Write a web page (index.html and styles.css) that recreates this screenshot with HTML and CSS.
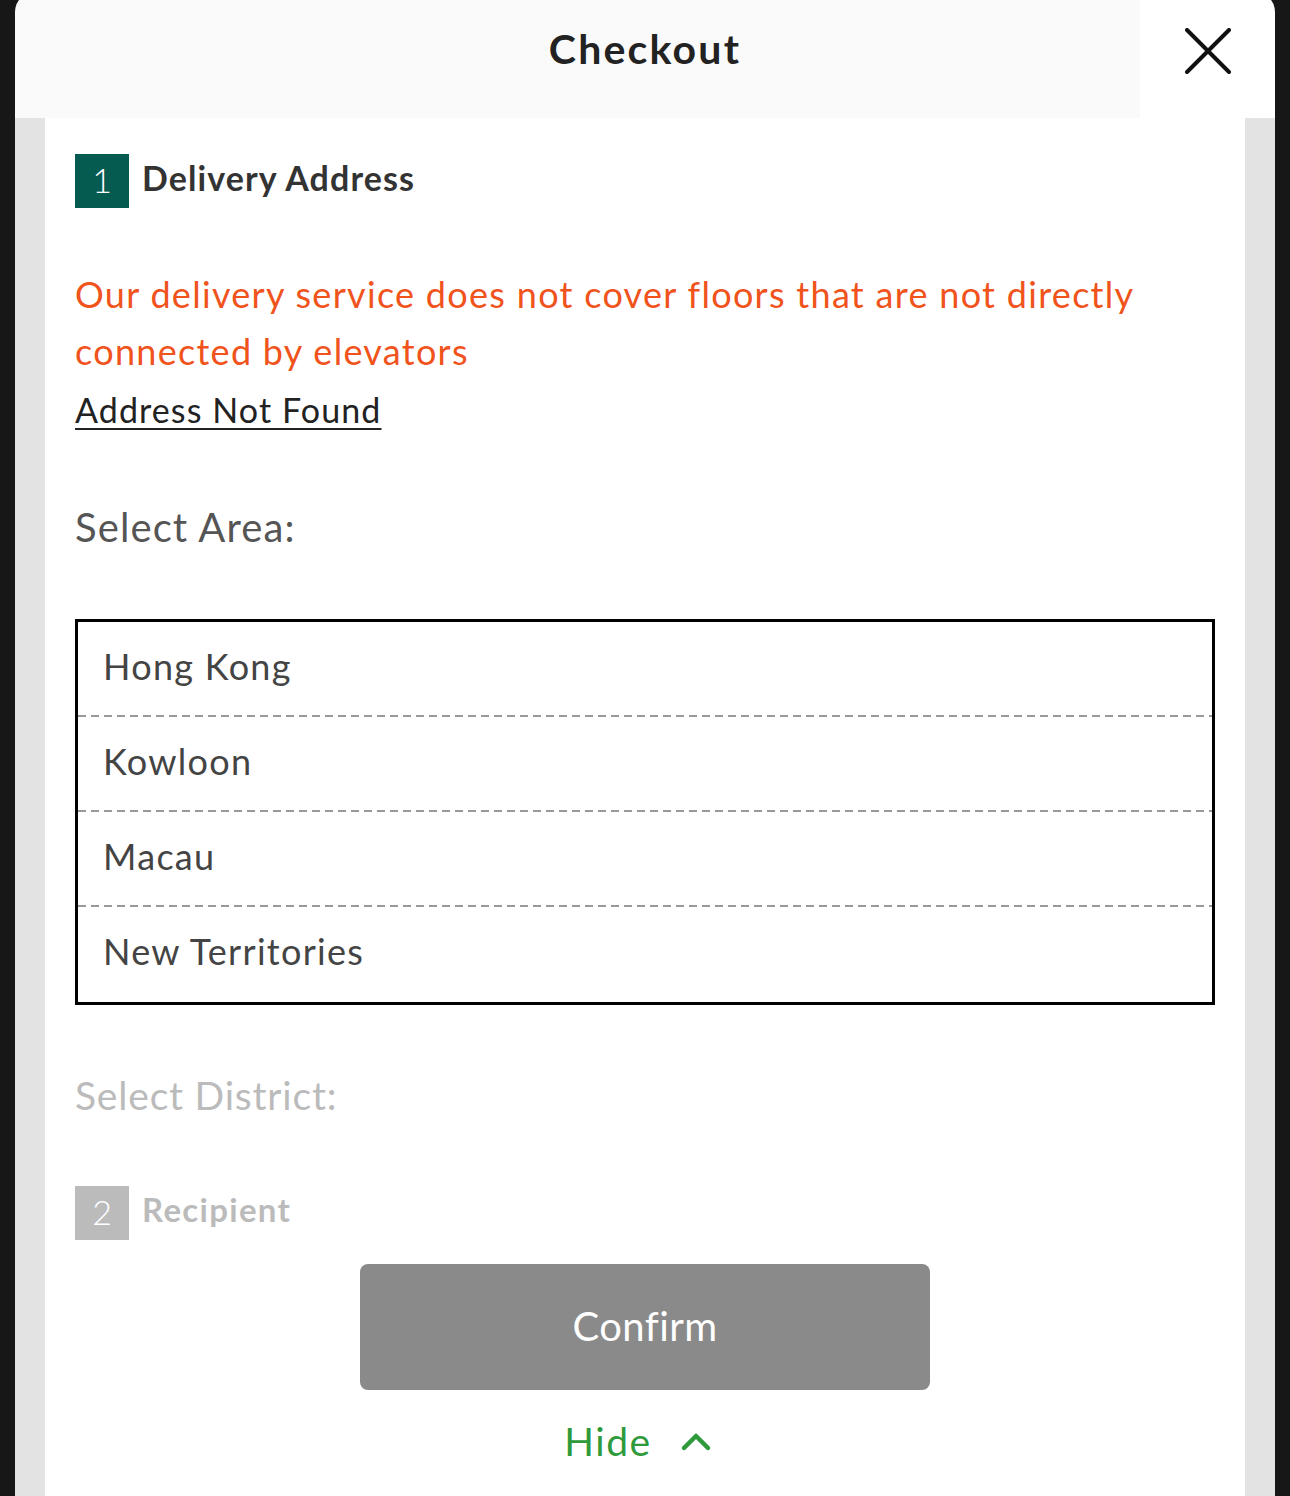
FILE: index.html
```html
<!DOCTYPE html>
<html lang="en">
<head>
  <meta charset="UTF-8" />
  <meta name="viewport" content="width=device-width, initial-scale=1.0" />
  <title>Checkout</title>
  <link rel="stylesheet" href="styles.css">
</head>
<body>
  <div class="modal">
    <div class="modal-header">
      <div class="header-side"></div>
      <h1 class="modal-title">Checkout</h1>
      <button class="close-btn" aria-label="Close">
        <svg width="46" height="46" viewBox="0 0 46 46">
          <path d="M2 2 L44 44 M44 2 L2 44" stroke="#111" stroke-width="4" stroke-linecap="round" fill="none"/>
        </svg>
      </button>
    </div>

    <div class="sheet">
      <div class="content">
        <div class="step">
          <span class="step-num">1</span>
          <span class="step-title">Delivery Address</span>
        </div>

        <p class="warning">Our delivery service does not cover floors that are not directly connected by elevators</p>
        <a class="not-found" href="#">Address Not Found</a>

        <h3 class="field-label">Select Area:</h3>
        <ul class="area-list">
          <li>Hong Kong</li>
          <li>Kowloon</li>
          <li>Macau</li>
          <li>New Territories</li>
        </ul>

        <h3 class="field-label disabled">Select District:</h3>

        <div class="step step-off">
          <span class="step-num">2</span>
          <span class="step-title">Recipient</span>
        </div>

        <button class="confirm-btn" disabled>Confirm</button>

        <div class="hide-row">
          <span>Hide</span>
          <svg width="32" height="22" viewBox="0 0 32 22">
            <path d="M4 17 L16 5 L28 17" stroke="#2f9a3b" stroke-width="4.5" stroke-linecap="round" stroke-linejoin="round" fill="none"/>
          </svg>
        </div>
      </div>
    </div>
  </div>
</body>
</html>
```

FILE: styles.css
```css
body {
  margin: 0;
  background: #161716;
  font-family: Lato, "Noto Sans", sans-serif;
  letter-spacing: 1.1px;
  height: 1496px;
  overflow: hidden;
}
.modal {
  margin: -8px 15px 0;
  border-radius: 20px 20px 0 0;
  overflow: hidden;
  height: 1504px;
  display: flex;
  flex-direction: column;
}
.modal-header {
  display: grid;
  grid-template-columns: 135px 1fr 135px;
  height: 126px;
  flex-shrink: 0;
}
.header-side, .modal-title {
  background: #fafafa;
}
.modal-title {
  margin: 0;
  padding-top: 2px;
  text-align: center;
  font-size: 41px;
  font-weight: 700;
  letter-spacing: 2.2px;
  color: #222;
  line-height: 110px;
}
.close-btn {
  background: #fff;
  border: none;
  padding: 0 0 8px 1px;
  display: flex;
  align-items: center;
  justify-content: center;
  cursor: pointer;
}
.sheet {
  flex: 1;
  background: #e3e3e3;
  padding: 0 30px;
}
.content {
  background: #fff;
  height: 100%;
  padding: 36px 30px 0;
  box-sizing: border-box;
}
.step {
  display: flex;
  align-items: center;
  height: 54px;
}
.step-num {
  width: 54px;
  height: 54px;
  padding-bottom: 3px;
  box-sizing: border-box;
  background: #065b51;
  color: #fff;
  font-size: 34px;
  font-weight: 300;
  letter-spacing: 0;
  display: flex;
  align-items: center;
  justify-content: center;
}
.step-title {
  margin-left: 13px;
  padding-bottom: 8px;
  font-size: 34px;
  font-weight: 700;
  color: #333;
}
.step-off .step-num {
  background: #bbb;
}
.step-off .step-title {
  color: #bbb;
  font-size: 33px;
  letter-spacing: 1.3px;
}
.warning {
  margin: 58px 0 0;
  font-size: 36px;
  line-height: 57px;
  letter-spacing: 1.3px;
  color: #f0531c;
}
.not-found {
  display: block;
  margin-top: 10px;
  font-size: 34px;
  line-height: 40px;
  color: #222;
  text-decoration: underline;
  text-underline-offset: 5px;
  text-decoration-thickness: 2px;
  width: max-content;
}
.field-label {
  margin: 74px 0 0;
  font-size: 40px;
  font-weight: 400;
  line-height: 46px;
  color: #555;
}
.field-label.disabled {
  margin-top: 67px;
  font-size: 39px;
  letter-spacing: 0.8px;
  color: #bbb;
}
.area-list {
  list-style: none;
  margin: 69px 0 0;
  padding: 0;
  border: 3px solid #000;
}
.area-list li {
  height: 95px;
  padding: 0 0 8px 25px;
  display: flex;
  align-items: center;
  font-size: 36px;
  letter-spacing: 1.3px;
  color: #444;
  box-sizing: border-box;
  background: repeating-linear-gradient(90deg, #999 0 8px, transparent 8px 13px) bottom left / 100% 2px no-repeat;
}
.area-list li:last-child {
  background: none;
}
.step-off {
  margin-top: 68px;
}
.confirm-btn {
  display: block;
  margin: 24px auto 0;
  padding-bottom: 4px;
  width: 570px;
  height: 126px;
  border: none;
  border-radius: 8px;
  background: #8a8a8a;
  color: #fff;
  font-family: inherit;
  font-size: 40px;
  letter-spacing: 0.4px;
}
.hide-row {
  margin-top: 28px;
  display: flex;
  justify-content: center;
  align-items: center;
  gap: 28px;
  font-size: 39px;
  line-height: 46px;
  letter-spacing: 1.5px;
  color: #2f9a3b;
}
.hide-row svg {
  margin: 2px 14px 0 0;
}
```
